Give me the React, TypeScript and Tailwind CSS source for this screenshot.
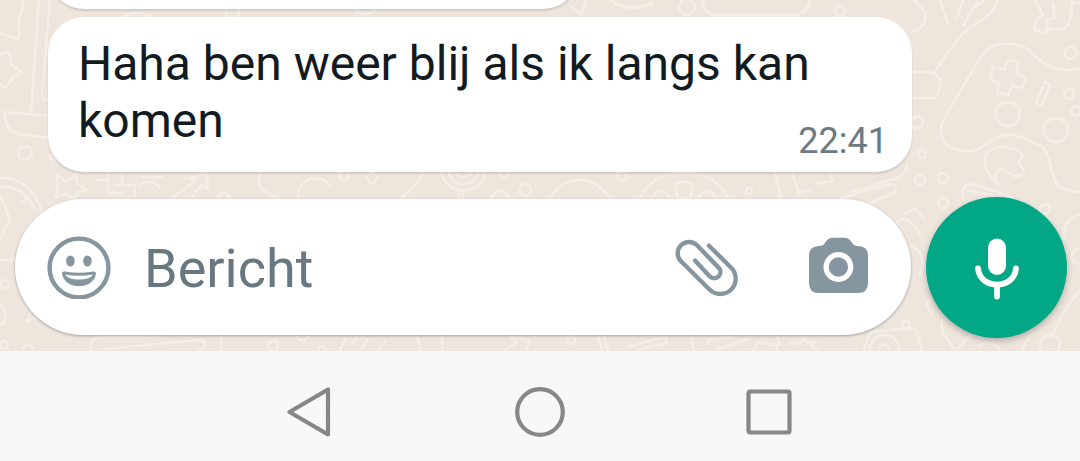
import type { ReactNode } from 'react';

interface BubbleProps {
  text: string;
  time: string;
}

function Wallpaper() {
  return (
    <svg
      className="absolute inset-0 h-full w-full"
      viewBox="0 0 1080 351"
      preserveAspectRatio="xMidYMid slice"
      fill="none"
      stroke="#f4eee8"
      strokeWidth="2.6"
      strokeLinecap="round"
      strokeLinejoin="round"
      aria-hidden="true"
    >
      {/* Left edge */}
      <path d="M23 0C24 12 15 20 20 32L18 39L0 33" />
      <path d="M0 54L9 51L12 65L22 72L13 77L6 88L-2 83" />
      <path d="M39 0L31 113M50 0L42 95Q42 100 49 100" />
      <path d="M4 112L49 116M4 112Q5 134 25 135L49 138" />
      <circle cx="25" cy="153" r="7" />
      <circle cx="53" cy="157" r="3" />
      <path d="M0 178C22 176 40 196 42 215M0 187C15 186 27 193 34 208M0 196L10 219L0 240M23 201L29 196M0 260Q16 262 24 252" />
      <circle cx="5" cy="284" r="4" />
      <path d="M0 305Q8 310 5 320Q3 325 0 324M33 304L27 322L36 318" />
      <path d="M57 175L66 182L76 175L77 184L87 190L78 192L73 199L66 194L55 197L58 187Z" />

      {/* Strip between bubble and composer */}
      <path d="M97 180H108V173M108 180V193H122M115 185H135V197M122 175V185M142 177H163M140 186Q150 176 160 188" />
      <path d="M174 197L196 180L189 178L207 173L208 189L201 185L192 197M218 197Q222 188 230 197" />
      <path d="M262 172Q254 186 268 193L278 198M298 197C300 174 324 174 331 187" />
      <circle cx="344" cy="175" r="5" />
      <circle cx="372" cy="178" r="5" />
      <path d="M423 173Q416 187 402 197M442 173C445 196 482 196 485 173M449 173C453 188 474 188 478 173M456 173Q463 181 471 173M459 190V198M463 190V198M492 198Q500 182 509 198" />
      <circle cx="504" cy="173" r="5" />
      <circle cx="525" cy="190" r="6" />
      <path d="M551 198C562 174 596 174 609 198M640 198C655 164 713 164 728 198M675 184Q684 180 693 184L691 198H678ZM652 198Q660 184 670 198M698 198Q706 184 716 198" />
      <circle cx="622" cy="176" r="5" />
      <circle cx="749" cy="191" r="3" />
      <path d="M775 173L781 198M792 174L799 193L810 190M817 184L833 181L830 174M841 198L890 184Q899 186 894 193L866 204M850 192L898 178Q907 172 907 166" />

      {/* Top strip */}
      <path d="M226 17V10M239 17V10M125 16Q138 10 150 16M355 10Q365 18 375 10" />
      <path d="M586 0L581 14L572 8M611 0Q628 14 653 3M703 0Q702 14 715 15H796Q808 12 810 0" />
      <circle cx="687" cy="7" r="8" />
      <circle cx="840" cy="11" r="5" />

      {/* Right side, carrot and game pad */}
      <path d="M914 0L926 13Q925 30 912 32M940 0L948 23M963 0L957 18M978 0L963 26M985 0L975 7" />
      <path d="M997 0C996 16 970 25 960 36L934 72M912 72H930Q940 74 940 85Q938 98 932 98H912" />
      <path d="M1035 0L1043 15L1036 20L1034 29L1043 33L1049 31M1053 4L1055 17L1047 20L1047 29H1064Q1073 22 1072 0M1072 3H1080" />
      <path d="M1080 68C1060 74 1045 66 1036 57C1025 42 995 36 980 58L945 117C936 135 942 148 962 151C985 153 985 138 1006 135C1020 134 1028 141 1043 147C1053 160 1050 180 1060 187Q1070 192 1080 192" />
      <path d="M1008 60L1018 61L1017 73L1026 78L1022 88L1012 86L1008 95L997 93L999 83L990 79L993 67L1004 70Z" />
      <path d="M1045 82L1050 84L1042 105L1036 103Z" />
      <circle cx="1008" cy="114" r="12" />
      <circle cx="1056" cy="130" r="12" />
      <circle cx="1071" cy="53" r="6" />
      <circle cx="1069" cy="94" r="5" />
      <circle cx="1076" cy="111" r="5" />
      <circle cx="917" cy="122" r="6" />
      <circle cx="922" cy="154" r="4" />
      <circle cx="920" cy="180" r="5" />
      <circle cx="943" cy="178" r="5" />
      <path d="M997 184C980 165 980 148 1002 147Q1020 148 1023 156L1018 163L1024 170Q1022 178 1014 176L1001 168L995 175Z" />
      <path d="M963 198Q960 186 972 184L1012 197M967 190L995 196" />

      {/* Around the mic button */}
      <path d="M904 214L916 209L924 219M896 224Q906 210 920 235M911 245Q928 255 920 275" />
      <circle cx="943" cy="203" r="5" />
      <circle cx="1045" cy="209" r="5" />
      <path d="M1080 214Q1062 220 1064 240M1080 248Q1068 252 1073 262L1080 264M1080 290Q1064 310 1052 335" />
      <circle cx="1050" cy="345" r="10" />
      <path d="M929 300Q924 308 932 312M942 320C940 335 950 340 954 350M970 335Q962 344 956 350M980 346Q992 338 1000 350M1030 335L1022 350" />
      <circle cx="906" cy="325" r="4" />

      {/* Strip below the composer */}
      <circle cx="4" cy="345" r="4" />
      <circle cx="28" cy="350" r="5" />
      <path d="M90 350Q90 338 100 337L160 337M105 349L198 340Q208 342 204 348L198 350M221 337V350M417 337L421 350M442 337V350" />
      <circle cx="273" cy="346" r="5" />
      <circle cx="322" cy="350" r="4" />
      <path d="M297 337Q302 344 308 337M340 350L346 338M352 344L356 338M362 348L368 339M378 350L386 341M505 350L516 343L511 337L530 340L526 350" />
      <circle cx="571" cy="340" r="4" />
      <path d="M598 337L602 350M604 337L608 350M628 347L660 338Q670 338 666 343L638 350M691 337L694 350M709 344Q706 339 714 339L733 337M716 350L748 339M754 350L758 342L777 345V350M777 337L780 345" />
      <path d="M790 343L799 344L804 338L807 343L816 341L812 346L818 350" />
      <path d="M864 350L869 336Q872 330 880 331L910 328Q917 328 918 334L922 350" />
      <path d="M870 350C870 330 899 330 899 350M879 350Q884 339 890 350" />
    </svg>
  );
}

function Bubble({ text, time }: BubbleProps) {
  return (
    <article className="ml-12 mr-[168px] flow-root rounded-[36px] bg-white pt-[18px] pr-6 pb-[10px] pl-[30px] shadow-[0_2px_2px_rgba(0,0,0,0.12)]">
      <p className="text-[48px] leading-[57px] text-[#111b21]">
        {text}
        <time className="float-right mt-7 text-[36px] leading-[42px] text-[#6b7a83]">{time}</time>
      </p>
    </article>
  );
}

function EmojiIcon() {
  return (
    <svg className="size-16" viewBox="0 0 64 64" fill="#8696a0" aria-hidden="true">
      <circle cx="32" cy="33" r="29.4" fill="none" stroke="#8696a0" strokeWidth="4.4" />
      <ellipse cx="23.4" cy="26" rx="4.3" ry="5.6" />
      <ellipse cx="40.4" cy="26" rx="4.3" ry="5.6" />
      <path d="M15 38.5Q15 36 18 36.6Q32 39 46 36.6Q49 36 49 38.5C48 46 41 51.3 32 51.3C23 51.3 16 46 15 38.5Z" />
      <path d="M18 39.6Q32 42 46 39.6Q43 44.6 32 44.6Q21 44.6 18 39.6Z" fill="#fff" />
    </svg>
  );
}

function PaperclipIcon() {
  return (
    <svg
      className="size-16"
      viewBox="0 0 64 64"
      fill="none"
      stroke="#8696a0"
      strokeWidth="4.4"
      strokeLinecap="round"
      aria-hidden="true"
    >
      <path d="M34 10.7L56.2 32.8A15.3 15.3 0 0 1 34.5 54.5L6 26.3A11.3 11.3 0 0 1 22 10.3L43.6 32.6A6.2 6.2 0 0 1 34.8 41.4L20 25.5" />
    </svg>
  );
}

function CameraIcon() {
  return (
    <svg className="size-16" viewBox="0 0 64 64" fill="#8696a0" aria-hidden="true">
      <path d="M13 11H14C20 11 19 2.8 27 2.8H38C46 2.8 45 11 51 11H52Q62 11 62 21V48Q62 58 52 58H13Q3 58 3 48V21Q3 11 13 11Z" />
      <circle cx="32.4" cy="32" r="12.3" fill="none" stroke="#fff" strokeWidth="5.2" />
    </svg>
  );
}

function MicIcon() {
  return (
    <svg className="size-16" viewBox="0 0 64 64" fill="none" stroke="#fff" strokeLinecap="round" aria-hidden="true">
      <rect x="23" y="2.5" width="18" height="36.5" rx="9" fill="#fff" stroke="none" />
      <path d="M13 32.5C15 54 49 54 51 32.5" strokeWidth="5.8" />
      <path d="M32 49V60.5" strokeWidth="5.8" />
    </svg>
  );
}

function NavButton({ label, children }: { label: string; children: ReactNode }) {
  return (
    <button type="button" aria-label={label} className="flex w-[229px] justify-center">
      <svg className="size-[50px]" viewBox="0 0 50 50" fill="none" stroke="#868788" strokeWidth="4.2" strokeLinejoin="round" aria-hidden="true">
        {children}
      </svg>
    </button>
  );
}

export default function App() {
  return (
    <div className="flex min-h-screen flex-col bg-[#f7f8fa] font-[Roboto,sans-serif]">
      <main className="relative overflow-hidden bg-[#eee6dd]">
        <Wallpaper />
        <div className="relative">
          <section aria-label="Berichten" className="flex flex-col gap-2">
            {/* Tail end of the previous message */}
            <div className="-mt-[63px] ml-12 h-[72px] w-[531px] rounded-[36px] bg-white shadow-[0_2px_2px_rgba(0,0,0,0.12)]" />
            <Bubble text="Haha ben weer blij als ik langs kan komen" time="22:41" />
          </section>

          <form className="flex items-start gap-[15px] pt-[25px] pr-[13px] pb-[13px] pl-[15px]">
            <div className="mt-[2px] flex h-[136px] min-w-0 flex-1 items-center rounded-full bg-white pr-[41px] pl-8 shadow-[0_1px_3px_rgba(0,0,0,0.3)]">
              <button type="button" aria-label="Emoji" className="shrink-0">
                <EmojiIcon />
              </button>
              <input
                type="text"
                aria-label="Bericht"
                placeholder="Bericht"
                className="ml-[33px] min-w-0 flex-1 bg-transparent pt-1 text-[54px] leading-[64px] text-[#111b21] outline-none placeholder:text-[#687780]"
              />
              <div className="flex shrink-0 gap-[67px]">
                <button type="button" aria-label="Bijlage">
                  <PaperclipIcon />
                </button>
                <button type="button" aria-label="Camera">
                  <CameraIcon />
                </button>
              </div>
            </div>
            <button
              type="button"
              aria-label="Spraakbericht opnemen"
              className="flex size-[141px] shrink-0 items-center justify-center rounded-full bg-[#02a885] shadow-[0_3px_6px_rgba(0,0,0,0.25)]"
            >
              <MicIcon />
            </button>
          </form>
        </div>
      </main>

      <nav aria-label="Systeemnavigatie" className="flex justify-center pt-9 pb-6">
        <NavButton label="Terug">
          <path d="M3.5 25L42 2.5V47.5Z" />
        </NavButton>
        <NavButton label="Start">
          <circle cx="25" cy="25" r="22.8" />
        </NavButton>
        <NavButton label="Recente apps">
          <rect x="4.5" y="4.5" width="41" height="41" rx="1.5" />
        </NavButton>
      </nav>
    </div>
  );
}
